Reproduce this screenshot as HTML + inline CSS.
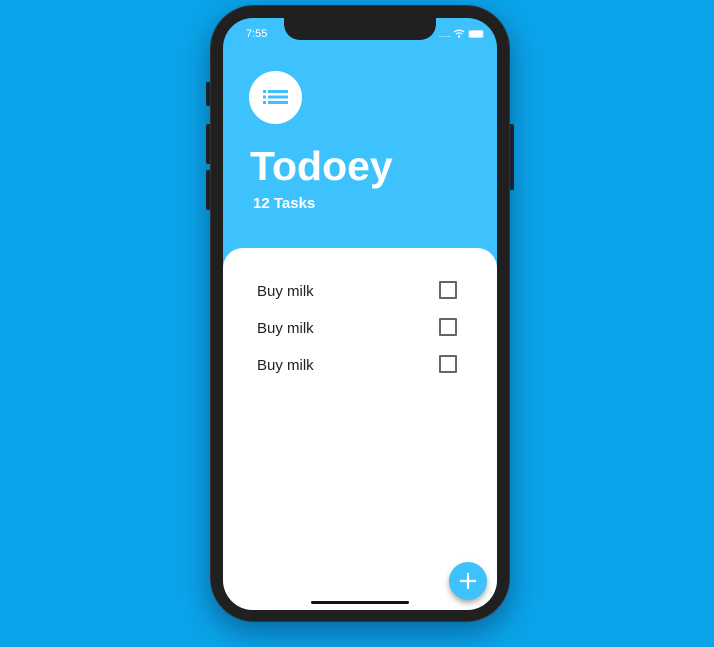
<!DOCTYPE html>
<html><head><style>
body{margin:0;width:714px;height:647px;background:#0ba4ea;overflow:hidden;font-family:"Liberation Sans",sans-serif;position:relative}
.phone{position:absolute;left:210px;top:5px;width:300px;height:617px;background:#202020;border-radius:44px;box-shadow:0 10px 30px rgba(0,40,80,.5);border:1px solid #333;box-sizing:border-box}
.btn{position:absolute;background:#222;border-radius:2px}
.screen{position:absolute;left:223px;top:18px;width:274px;height:592px;background:#3ec2fd;border-radius:30px;overflow:hidden}
.notch{position:absolute;left:61px;top:0;width:152px;height:22px;background:#202020;border-radius:0 0 16px 16px}
.card{position:absolute;left:0;top:230px;width:274px;height:362px;background:#fff;border-radius:20px 20px 0 0}
.item{position:absolute;left:34px;font-size:15px;color:#222}
.cb{position:absolute;left:216px;width:14px;height:14px;border:2px solid #666;border-radius:1px}
</style></head><body>
<div class="btn" style="left:206px;top:82px;width:5px;height:24px"></div>
<div class="btn" style="left:206px;top:124px;width:5px;height:40px"></div>
<div class="btn" style="left:206px;top:170px;width:5px;height:40px"></div>
<div class="btn" style="left:509px;top:124px;width:5px;height:66px"></div>
<div class="phone"></div>
<div class="screen">
<div class="notch"></div>
<div style="position:absolute;left:23px;top:10px;color:#fff;font-size:11px">7:55</div>
<svg style="position:absolute;left:216px;top:11px" width="46" height="10"><g fill="#9fdfff"><rect x="0" y="7" width="2" height="1"/><rect x="3" y="7" width="2" height="1"/><rect x="6" y="7" width="2" height="1"/><rect x="9" y="7" width="2" height="1"/></g><path d="M15 3a8 8 0 0 1 10 0M17 5a5 5 0 0 1 6 0" stroke="#fff" stroke-width="1.3" fill="none"/><circle cx="20" cy="7.5" r="1.2" fill="#fff"/><rect x="30" y="1.5" width="14" height="7" rx="1.5" fill="#fff" stroke="#bfe8ff"/></svg>
<div style="position:absolute;left:26px;top:53px;width:53px;height:53px;border-radius:50%;background:#fff"></div>
<svg style="position:absolute;left:40px;top:71px" width="26" height="16"><g fill="#3ec2fd"><rect x="0" y="1" width="3" height="3"/><rect x="0" y="6.5" width="3" height="3"/><rect x="0" y="12" width="3" height="3"/><rect x="5" y="1" width="20" height="3"/><rect x="5" y="6.5" width="20" height="3"/><rect x="5" y="12" width="20" height="3"/></g></svg>
<div style="position:absolute;left:27px;top:125px;color:#fff;font-size:41px;font-weight:bold">Todoey</div>
<div style="position:absolute;left:30px;top:177px;color:#fff;font-size:15px;font-weight:bold">12 Tasks</div>
<div class="card">
<div class="item" style="top:35px">Buy milk</div><div class="cb" style="top:33px"></div>
<div class="item" style="top:72px">Buy milk</div><div class="cb" style="top:70px"></div>
<div class="item" style="top:109px">Buy milk</div><div class="cb" style="top:107px"></div>
</div>
<div style="position:absolute;left:226px;top:544px;width:38px;height:38px;border-radius:50%;background:#3ec2fd;box-shadow:0 3px 6px rgba(0,0,0,.35)"></div>
<svg style="position:absolute;left:236px;top:554px" width="18" height="18"><path d="M9 1v16M1 9h16" stroke="#fff" stroke-width="2.2"/></svg>
<div style="position:absolute;left:88px;top:583px;width:98px;height:3px;border-radius:2px;background:#111"></div>
</div>
</body></html>
